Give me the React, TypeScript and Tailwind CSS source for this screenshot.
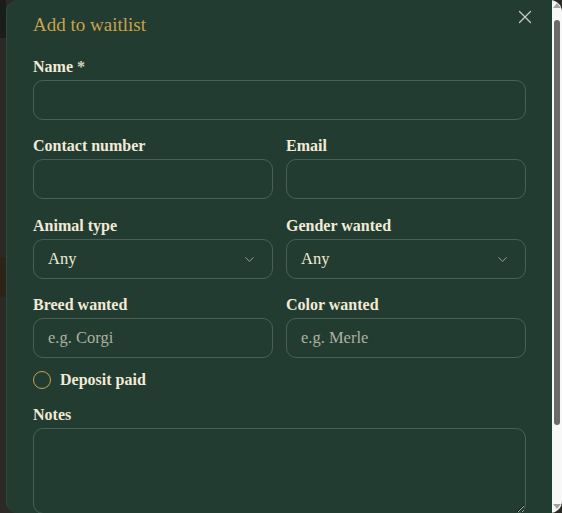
import { X, ChevronDown } from 'lucide-react'

const serif = { fontFamily: '"Liberation Serif", "DejaVu Serif", serif' }

function Label({ children }: { children: React.ReactNode }) {
  return <label className="block text-[16px] font-bold leading-5 text-[#f2ead6] mb-[3px]">{children}</label>
}

function TextField({ label, placeholder }: { label: React.ReactNode; placeholder?: string }) {
  return (
    <div className="flex-1 min-w-0">
      <Label>{label}</Label>
      <input
        placeholder={placeholder}
        className="w-full h-10 rounded-[10px] border border-[#4b6157] bg-transparent px-[14px] text-[16.5px] text-[#f2ead6] placeholder:text-[#aeb0a0] outline-none"
        style={serif}
      />
    </div>
  )
}

function SelectField({ label }: { label: string }) {
  return (
    <div className="flex-1 min-w-0">
      <Label>{label}</Label>
      <div className="flex items-center justify-between h-10 rounded-[10px] border border-[#4b6157] pl-[14px] pr-[15px]">
        <span className="text-[16.5px] text-[#f2ead6]">Any</span>
        <ChevronDown size={15} strokeWidth={1.5} className="text-[#9aa49c]" />
      </div>
    </div>
  )
}

export default function App() {
  return (
    <div className="flex w-[562px] h-[513px] overflow-hidden bg-[#2c2a27]" style={serif}>
      {/* page behind the overlay */}
      <div className="flex flex-col w-[6px] shrink-0">
        <div className="h-[38px] bg-[#1a1e1b]" />
        <div className="h-[219px] bg-[#2c2a27]" />
        <div className="h-[40px] bg-[#2b2417]" />
        <div className="flex-1 bg-[#2c2a27]" />
      </div>

      {/* dialog */}
      <div className="flex flex-1 h-[513px] rounded-[12px] overflow-hidden bg-[#223c31] border-l border-[#2f4a3e]">
        <div className="flex-1 px-[26px] pt-[11px]">
          <div className="flex items-start justify-between">
            <h2 className="text-[19px] leading-7 text-[#c9a24a]">Add to waitlist</h2>
            <X size={22} strokeWidth={1.4} className="-mt-[5px] -mr-[10px] text-[#c9cbc2]" />
          </div>

          <div className="mt-[18px] flex flex-col gap-4">
            <TextField label={<>Name <span className="text-[#d8d2c2]">*</span></>} />

            <div className="flex gap-[13px]">
              <TextField label="Contact number" />
              <TextField label="Email" />
            </div>

            <div className="flex gap-[13px] mt-px">
              <SelectField label="Animal type" />
              <SelectField label="Gender wanted" />
            </div>

            <div className="flex gap-[13px]">
              <TextField label="Breed wanted" placeholder="e.g. Corgi" />
              <TextField label="Color wanted" placeholder="e.g. Merle" />
            </div>

            <div className="flex items-center gap-[9px] h-4 -mt-[2px]">
              <span className="w-[18px] h-[18px] rounded-full border-[1.5px] border-[#c9a24a]" />
              <span className="text-[16px] font-bold text-[#f2ead6]">Deposit paid</span>
            </div>

            <div className="mt-px">
              <Label>Notes</Label>
              <textarea
                className="block w-full h-[86px] rounded-[10px] border border-[#4b6157] bg-transparent px-[14px] py-2 text-[16px] text-[#f2ead6] outline-none"
                style={serif}
              />
            </div>
          </div>
        </div>

        {/* scrollbar */}
        <div className="flex flex-col items-center w-[10px] shrink-0 bg-[#f8f8f8] pt-[3px] pb-[4px]">
          <div className="w-0 h-0 border-x-[4px] border-x-transparent border-b-[5px] border-b-[#a3a3a3]" />
          <div className="mt-[12px] w-[6px] h-[405px] rounded-[3px] bg-[#6b6b6b]" />
          <div className="flex-1" />
          <div className="w-0 h-0 border-x-[4px] border-x-transparent border-t-[5px] border-t-[#a3a3a3]" />
        </div>
      </div>
    </div>
  )
}
